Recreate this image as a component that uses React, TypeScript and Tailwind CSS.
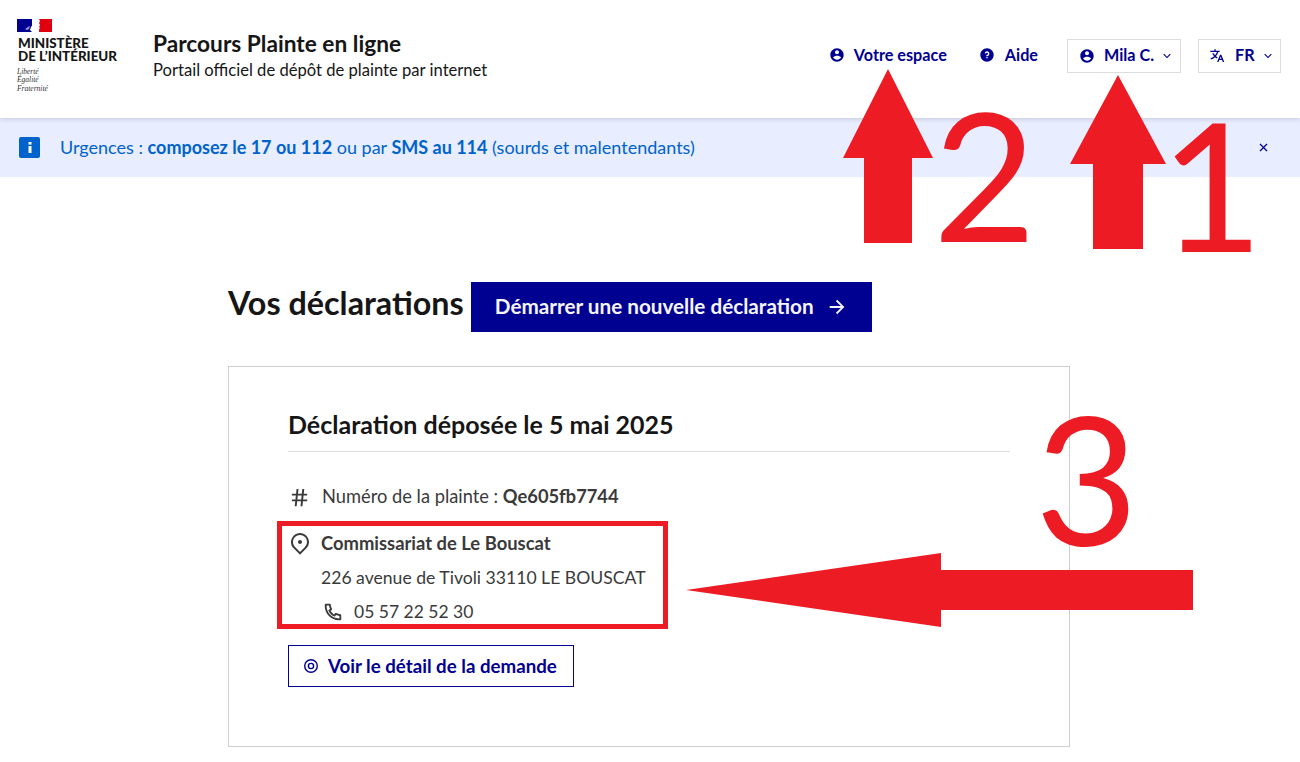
import React from "react";
import {
  RiAccountCircleFill,
  RiArrowDownSLine,
  RiArrowRightLine,
  RiCloseLine,
  RiHashtag,
  RiMapPin2Line,
  RiPhoneLine,
  RiQuestionFill,
  RiTranslate2,
} from "react-icons/ri";

const font = { fontFamily: "Lato, 'Noto Sans', sans-serif" };

function Logo() {
  return (
    <div className="w-[110px] pb-[6px]">
      <svg width="35" height="13" viewBox="0 0 35 13" className="block">
        <rect width="35" height="13" fill="#fff" />
        <rect width="15" height="13" fill="#000091" />
        <rect x="22" width="13" height="13" fill="#e1000f" />
        <path d="M15 0h7l1 2-1 2 1 2-1 2 1 1-2 3-6 1-2-2 1-3 2-3z" fill="#fff" />
        <path d="M8 10l3-2 2-1-1 3-2 1z" fill="#9a9ad0" />
      </svg>
      <div className="mt-[5px] pl-[1px] text-[13.4px] leading-[13.5px] font-black text-[#161616]">
        <div>MINISTÈRE</div>
        <div className="whitespace-nowrap">DE L’INTÉRIEUR</div>
      </div>
      <div className="mt-[4px] text-[7.5px] leading-[8.5px] italic text-[#333] font-['Liberation_Serif',serif]">
        <div>Liberté</div>
        <div>Égalité</div>
        <div>Fraternité</div>
      </div>
    </div>
  );
}

function Header() {
  return (
    <header className="relative z-10 flex h-[118px] items-center bg-white pl-[17px] pr-[19px] shadow-[0_1px_5px_rgba(0,0,18,0.16)]">
      <Logo />
      <div className="ml-[26px] pb-[6px] text-[#161616]">
        <div className="text-[22.7px] leading-[28px] font-bold">Parcours Plainte en ligne</div>
        <div className="text-[16.6px] leading-[24px]">Portail officiel de dépôt de plainte par internet</div>
      </div>
      <nav className="ml-auto flex items-center pb-[7px] text-[16.2px] font-bold text-[#000091]">
        <a className="flex items-center gap-[9px]">
          <RiAccountCircleFill size={16} />
          Votre espace
        </a>
        <a className="ml-[32px] flex items-center gap-[10px]">
          <RiQuestionFill size={16} />
          Aide
        </a>
        <button className="ml-[29px] flex h-[34px] w-[114px] items-center border border-[#dddddd] pl-[11px]">
          <RiAccountCircleFill size={16} />
          <span className="ml-[9px]">Mila C.</span>
          <RiArrowDownSLine size={14} className="ml-[6px]" />
        </button>
        <button className="ml-[17px] flex h-[34px] w-[83px] items-center border border-[#dddddd] pl-[10px]">
          <RiTranslate2 size={16} />
          <span className="ml-[10px]">FR</span>
          <RiArrowDownSLine size={14} className="ml-[6px]" />
        </button>
      </nav>
    </header>
  );
}

function Notice() {
  return (
    <div className="flex h-[59px] items-center bg-[#e8edff] pl-[19px] pr-[29px] text-[18px] text-[#0063cb]">
      <div className="flex h-[21px] w-[21px] items-center justify-center rounded-[2px] bg-[#0063cb]">
        <svg width="4" height="11" viewBox="0 0 4 11">
          <rect x="0.5" width="3" height="2.6" fill="#fff" />
          <rect x="0.5" y="4" width="3" height="7" fill="#fff" />
        </svg>
      </div>
      <p className="ml-[20px]">
        Urgences : <b>composez le 17 ou 112</b> ou par <b>SMS au 114</b> (sourds et malentendants)
      </p>
      <RiCloseLine size={15} className="ml-auto text-[#000091]" />
    </div>
  );
}

function Declaration() {
  return (
    <section className="mt-[30px] h-[381px] border border-[#cecece] px-[59px] pt-[42px] text-[#3a3a3a]">
      <h3 className="border-b border-[#dddddd] pb-[12px] text-[25px] leading-[30px] font-bold text-[#161616]">
        Déclaration déposée le 5 mai 2025
      </h3>
      <div className="mt-[30px] flex h-[30px] items-center text-[18.3px]">
        <RiHashtag size={23} className="mr-[11px]" />
        <span>
          Numéro de la plainte : <b>Qe605fb7744</b>
        </span>
      </div>
      <div className="mt-[18px] flex h-[28px] items-center text-[18.4px]">
        <RiMapPin2Line size={24} className="mr-[9px] mb-[2px]" />
        <b>Commissariat de Le Bouscat</b>
      </div>
      <div className="mt-[6px] h-[28px] pl-[33px] text-[17.6px] leading-[28px]">226 avenue de Tivoli 33110 LE BOUSCAT</div>
      <div className="mt-[6px] flex h-[28px] items-center pl-[34px] text-[17.5px]">
        <RiPhoneLine size={22} className="mr-[10px]" />
        05 57 22 52 30
      </div>
      <button className="mt-[19px] flex h-[42px] w-[286px] items-center border border-[#000091] pl-[14px] text-[18.7px] font-bold text-[#000091]">
        <svg width="16" height="16" viewBox="0 0 16 16" fill="none" stroke="currentColor" strokeWidth="1.4">
          <circle cx="8" cy="8" r="6.3" />
          <circle cx="8" cy="8" r="2.6" />
        </svg>
        <span className="ml-[9px]">Voir le détail de la demande</span>
      </button>
    </section>
  );
}

// annotations pasted over the screenshot
function Annotations() {
  return (
    <div className="pointer-events-none absolute inset-0 z-20">
      <svg width="1300" height="762" className="absolute inset-0">
        <path d="M888 69L933 158H912V243H864V158H843Z" fill="#ed1c24" />
        <path d="M1118 75L1166 164H1143V249H1093V164H1070Z" fill="#ed1c24" />
        <path d="M686 590L941 553V570H1193V610H941V627Z" fill="#ed1c24" />
      </svg>
      <div className="absolute left-[277px] top-[521px] h-[108px] w-[391px] border-[5px] border-[#ed1c24]" />
      <span className="absolute left-[933px] top-[78px] text-[178px] leading-[190px] text-[#ed1c24]">2</span>
      <span className="absolute left-[1160px] top-[88px] text-[178px] leading-[190px] text-[#ed1c24]">1</span>
      <span className="absolute left-[1035px] top-[382px] text-[178px] leading-[190px] text-[#ed1c24]">3</span>
    </div>
  );
}

export default function App() {
  return (
    <div className="relative h-[762px] overflow-hidden bg-white" style={font}>
      <Header />
      <Notice />
      <main className="ml-[228px] w-[842px] pt-[101px]">
        <div className="flex items-center">
          <h2 className="pb-[8px] text-[32.3px] leading-[50px] font-bold text-[#161616]">Vos déclarations</h2>
          <button className="ml-[7px] flex h-[50px] w-[401px] items-center justify-center gap-[12px] bg-[#000091] text-[20.7px] font-bold text-[#f5f5fe]">
            Démarrer une nouvelle déclaration
            <RiArrowRightLine size={22} />
          </button>
        </div>
        <Declaration />
      </main>
      <Annotations />
    </div>
  );
}
